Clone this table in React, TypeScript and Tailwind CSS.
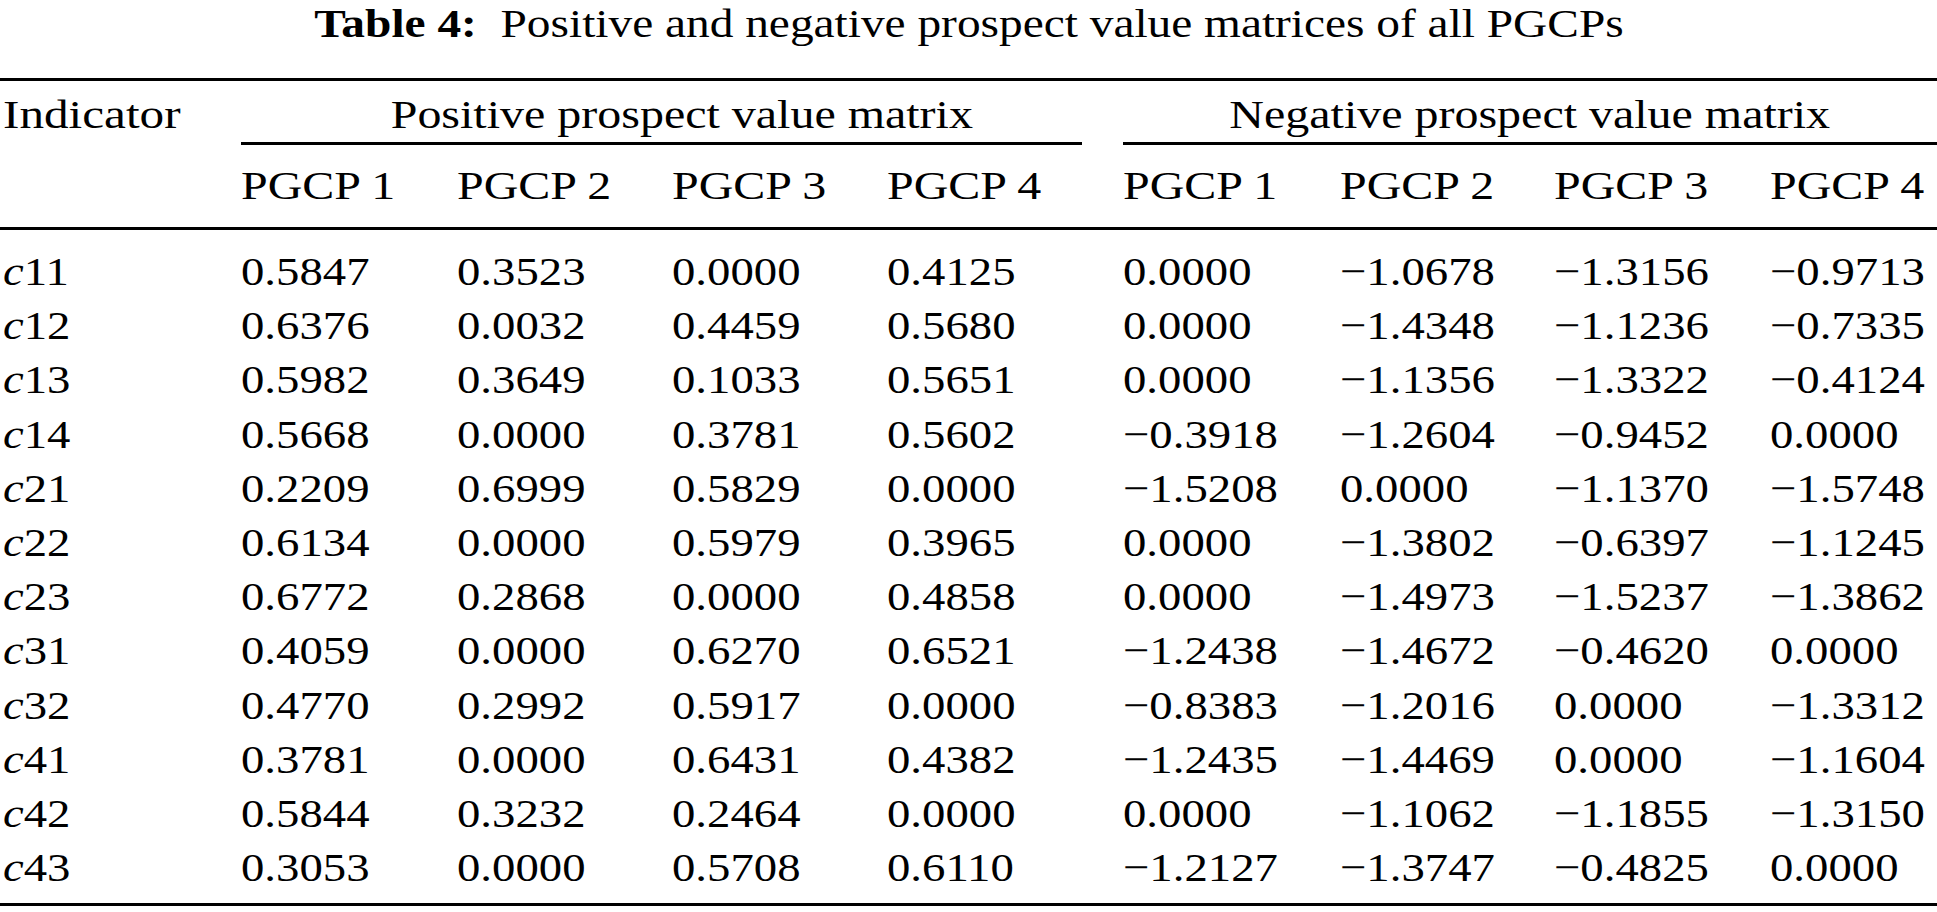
import React from "react";

const rows: [string, string[]][] = [
  ["11", ["0.5847", "0.3523", "0.0000", "0.4125", "0.0000", "−1.0678", "−1.3156", "−0.9713"]],
  ["12", ["0.6376", "0.0032", "0.4459", "0.5680", "0.0000", "−1.4348", "−1.1236", "−0.7335"]],
  ["13", ["0.5982", "0.3649", "0.1033", "0.5651", "0.0000", "−1.1356", "−1.3322", "−0.4124"]],
  ["14", ["0.5668", "0.0000", "0.3781", "0.5602", "−0.3918", "−1.2604", "−0.9452", "0.0000"]],
  ["21", ["0.2209", "0.6999", "0.5829", "0.0000", "−1.5208", "0.0000", "−1.1370", "−1.5748"]],
  ["22", ["0.6134", "0.0000", "0.5979", "0.3965", "0.0000", "−1.3802", "−0.6397", "−1.1245"]],
  ["23", ["0.6772", "0.2868", "0.0000", "0.4858", "0.0000", "−1.4973", "−1.5237", "−1.3862"]],
  ["31", ["0.4059", "0.0000", "0.6270", "0.6521", "−1.2438", "−1.4672", "−0.4620", "0.0000"]],
  ["32", ["0.4770", "0.2992", "0.5917", "0.0000", "−0.8383", "−1.2016", "0.0000", "−1.3312"]],
  ["41", ["0.3781", "0.0000", "0.6431", "0.4382", "−1.2435", "−1.4469", "0.0000", "−1.1604"]],
  ["42", ["0.5844", "0.3232", "0.2464", "0.0000", "0.0000", "−1.1062", "−1.1855", "−1.3150"]],
  ["43", ["0.3053", "0.0000", "0.5708", "0.6110", "−1.2127", "−1.3747", "−0.4825", "0.0000"]],
];

const gridCols =
  "grid grid-cols-[241px_216px_215px_215px_236px_217px_214px_216px_1fr]";

function T({ children }: { children: React.ReactNode }) {
  return (
    <span className="inline-block whitespace-nowrap origin-left scale-x-[1.14]">
      {children}
    </span>
  );
}

function H({ children }: { children: React.ReactNode }) {
  return (
    <span className="inline-block whitespace-nowrap origin-left scale-x-[1.17]">
      {children}
    </span>
  );
}

export default function App() {
  return (
    <div className="w-full h-[912px] overflow-hidden bg-white text-black [font-family:Liberation_Serif,Times_New_Roman,serif] text-[41px]">
      <div className="h-[78px] text-center leading-[47px]">
        <span className="inline-block whitespace-nowrap origin-center scale-x-[1.155]">
          <b className="font-bold">Table 4:</b>
          <span className="ml-[0.5em]">
            Positive and negative prospect value matrices of all PGCPs
          </span>
        </span>
      </div>
      <div className="h-[3px] bg-black" />
      <div className={`${gridCols} pt-[6px] leading-[54px]`}>
        <div className="pl-[3px]">
          <span className="inline-block whitespace-nowrap origin-left scale-x-[1.2]">
            Indicator
          </span>
        </div>
        <div className="col-span-4 text-center">
          <span className="inline-block whitespace-nowrap origin-center scale-x-[1.17]">
            Positive prospect value matrix
          </span>
        </div>
        <div className="col-span-4 text-center">
          <span className="inline-block whitespace-nowrap origin-center scale-x-[1.17]">
            Negative prospect value matrix
          </span>
        </div>
      </div>
      <div className={`${gridCols} pt-[1px]`}>
        <div />
        <div className="col-span-4 mr-[41px] h-[3px] bg-black" />
        <div className="col-span-4 h-[3px] bg-black" />
      </div>
      <div className={`${gridCols} pt-[13px] pb-[15px] leading-[54px]`}>
        <div />
        {["PGCP 1", "PGCP 2", "PGCP 3", "PGCP 4", "PGCP 1", "PGCP 2", "PGCP 3", "PGCP 4"].map(
          (h, i) => (
            <div key={i}>
              <H>{h}</H>
            </div>
          )
        )}
      </div>
      <div className="h-[3px] bg-black" />
      <div className="pt-[14px] pb-[9px]">
        {rows.map(([id, vals]) => (
          <div key={id} className={`${gridCols} leading-[54.2px]`}>
            <div className="pl-[3px]">
              <T>
                <i className="italic">c</i>
                {id}
              </T>
            </div>
            {vals.map((v, i) => (
              <div key={i}>
                <T>{v}</T>
              </div>
            ))}
          </div>
        ))}
      </div>
      <div className="h-[3px] bg-black" />
    </div>
  );
}
